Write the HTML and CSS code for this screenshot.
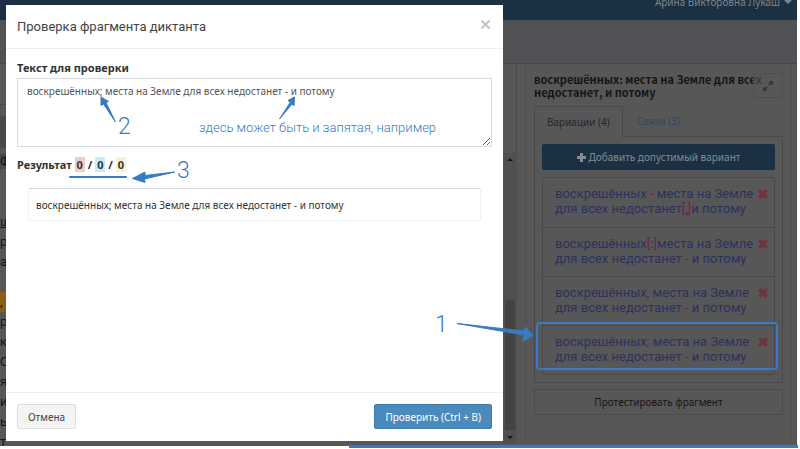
FILE: index.html
```html
<!DOCTYPE html>
<html lang="ru">
<head>
    <meta charset="UTF-8">
    <meta name="viewport" content="width=device-width, initial-scale=1.0">
    <title>Проверка фрагмента диктанта</title>
    <link rel="stylesheet" href="styles.css">
</head>
<body>

  <div class="page">
    <header class="navbar">
      <a class="user" href="#">Арина Викторовна Лукаш <span class="caret"></span></a>
    </header>
    <div class="subbar"></div>

    <main class="workspace">
      <!-- dictation text -->
      <section class="document">
        <div class="toolbar"></div>
        <div class="toolbar-row"></div>
        <div class="lines">
          <p><mark class="grey">Ф</mark></p>
          <p></p>
          <p></p>
          <p class="underlined">ш</p>
          <p>р</p>
          <p>а</p>
          <p></p>
          <p class="orange">,</p>
          <p>р</p>
          <p>к</p>
          <p>С</p>
          <p>я</p>
          <p>и</p>
          <p>ь</p>
          <p>т</p>
        </div>
      </section>

      <div class="scroll">
        <div class="scroll-head"></div>
        <div class="scroll-track">
          <span class="arrow up"></span>
          <span class="thumb"></span>
          <span class="arrow down"></span>
        </div>
      </div>

      <!-- fragment panel -->
      <aside class="fragment">
        <div class="fragment-head">
          <h2>воскрешённых: места на Земле для всех недостанет, и потому</h2>
          <button class="expand" aria-label="Развернуть">
            <svg width="12" height="12" viewBox="0 0 12 12"><path d="M7 1h4v4L9.600 3.700 7.600 5.600 6.400 4.400 8.300 2.400zM5 11H1V7l1.400 1.300 2-1.900 1.200 1.200-1.900 2z"/></svg>
          </button>
        </div>
        <nav class="tabs">
          <a class="tab active" href="#variants">Вариации (4)</a>
          <a class="tab" href="#links">Связи (3)</a>
        </nav>
        <div class="tab-content" id="variants">
          <button class="add">
            <svg width="9" height="9" viewBox="0 0 9 9"><path d="M3 0h3v3h3v3H6v3H3V6H0V3h3z"/></svg>
            Добавить допустимый вариант
          </button>
          <ul class="variants">
            <li>
              <span>воскрешённых <i>-</i> места на Земле<br>для всех недостанет<b>[</b>,<b>]</b>и потому</span>
              <button class="remove" aria-label="Удалить"><svg width="10" height="10" viewBox="0 0 10 10"><path d="M2.500 0L5 2.500 7.500 0 10 2.500 7.500 5 10 7.500 7.500 10 5 7.500 2.500 10 0 7.500 2.500 5 0 2.500z"/></svg></button>
            </li>
            <li>
              <span>воскрешённых<b>[</b>:<b>]</b>места на Земле<br>для всех недостанет <i>-</i> и потому</span>
              <button class="remove" aria-label="Удалить"><svg width="10" height="10" viewBox="0 0 10 10"><path d="M2.500 0L5 2.500 7.500 0 10 2.500 7.500 5 10 7.500 7.500 10 5 7.500 2.500 10 0 7.500 2.500 5 0 2.500z"/></svg></button>
            </li>
            <li>
              <span>воскрешённых<b>,</b> места на Земле<br>для всех недостанет <i>-</i> и потому</span>
              <button class="remove" aria-label="Удалить"><svg width="10" height="10" viewBox="0 0 10 10"><path d="M2.500 0L5 2.500 7.500 0 10 2.500 7.500 5 10 7.500 7.500 10 5 7.500 2.500 10 0 7.500 2.500 5 0 2.500z"/></svg></button>
            </li>
            <li>
              <span>воскрешённых<b>;</b> места на Земле<br>для всех недостанет <i>-</i> и потому</span>
              <button class="remove" aria-label="Удалить"><svg width="10" height="10" viewBox="0 0 10 10"><path d="M2.500 0L5 2.500 7.500 0 10 2.500 7.500 5 10 7.500 7.500 10 5 7.500 2.500 10 0 7.500 2.500 5 0 2.500z"/></svg></button>
            </li>
          </ul>
        </div>
        <button class="test">Протестировать фрагмент</button>
      </aside>
    </main>
  </div>

  <form class="modal" role="dialog" aria-labelledby="modalTitle">
    <div class="modal-header">
      <h1 id="modalTitle">Проверка фрагмента диктанта</h1>
      <button type="button" class="close" aria-label="Закрыть">
        <svg width="11" height="11" viewBox="0 0 11 11"><path d="M1.500 1.500l8 8M9.500 1.500l-8 8"/></svg>
      </button>
    </div>
    <div class="modal-body">
      <label for="source">Текст для проверки</label>
      <textarea id="source" spellcheck="false">воскрешённых; места на Земле для всех недостанет - и потому</textarea>
      <h3>Результат <span class="red">0</span> / <span class="blue">0</span> / <span class="yellow">0</span></h3>
      <div class="result">воскрешённых; места на Земле для всех недостанет - и потому</div>
    </div>
    <div class="modal-footer">
      <button type="button" class="cancel">Отмена</button>
      <button type="submit" class="check">Проверить (Ctrl + B)</button>
    </div>
  </form>

  <!-- hints drawn over the page -->
  <svg class="hints" width="800" height="449" viewBox="0 0 800 449">
    <g class="shapes">
      <path d="M115.500 122L106 102.500l2.500-1L101 97l0 8.500 2.500-1.500z"/>
      <path d="M279.500 119L290.500 102l-2.500-1.500L294.500 97l-.5 8.500-2-1.500z"/>
      <path d="M174.500 172L145 175.500l0-3.500L132.500 178.500 145 182.500l-.5-3.500z"/>
      <path d="M457 323.500L524 335l-1.500 6.500L533 335.500 525.500 327l-1 4z"/>
      <rect x="69" y="176" width="58" height="2" rx="1"/>
      <rect x="349" y="445" width="449" height="3"/>
    </g>
    <rect class="frame" x="537" y="323" width="240" height="46" rx="3"/>
    <text class="num" x="435" y="332">1</text>
    <text class="num" x="118" y="134">2</text>
    <text class="num" x="177" y="178">3</text>
    <text class="note" x="199" y="132">здесь может быть и запятая, например</text>
  </svg>

</body>
</html>
```
FILE: styles.css
```css
* {
  box-sizing: border-box;
}

body {
  margin: 0;
  position: relative;
  min-height: 449px;
  background: #fff;
  color: #333;
  font-family: "Noto Sans", sans-serif;
  font-size: 10px;
}

h1, h2, h3, p, ul {
  margin: 0;
  padding: 0;
}

button {
  font: inherit;
  cursor: pointer;
}

a {
  text-decoration: none;
}

.lines, .variants li, .modal-header h1 {
  font-family: Roboto, "Noto Sans", sans-serif;
  font-size: 13px;
}

/* page under the backdrop */
.page {
  display: flex;
  flex-direction: column;
  height: 446px;
  margin-right: 3px;
  background: #575757;
  overflow: hidden;
}

.navbar {
  display: flex;
  justify-content: flex-end;
  height: 20px;
  flex: none;
  padding-right: 5px;
  background: #1b3042;
}

.user {
  display: flex;
  align-items: center;
  gap: 4px;
  height: 4px;
  color: #7d858b;
}

.caret {
  border: 4px solid transparent;
  border-top-color: #7d858b;
  border-bottom: 0;
}

.subbar {
  height: 44px;
  flex: none;
  background: #505255;
  border-bottom: 1px solid #464749;
}

.workspace {
  display: flex;
  flex: 1;
  min-height: 0;
  padding-right: 4px;
  border-right: 1px solid #4e5052;
}

.document {
  flex: 1;
  overflow: hidden;
}

.toolbar {
  height: 41px;
  border-bottom: 1px solid #484848;
}

.toolbar-row {
  height: 43px;
  border-top: 11px solid #575757;
  background: #484848;
}

.lines {
  padding-top: 4px;
  line-height: 20px;
  color: #161616;
}

.lines p {
  height: 20px;
}

.grey {
  color: inherit;
  background: #484848;
}

.underlined {
  text-decoration: underline;
}

.orange {
  background: #8a5f17;
}

.scroll {
  width: 14px;
  margin-right: 8px;
}

.scroll-head {
  height: 89px;
  border-right: 1px solid #484848;
}

.scroll-track {
  display: flex;
  flex-direction: column;
  align-items: center;
  height: 291px;
  padding: 5px 2px;
  background: #505050;
}

.arrow {
  border: 3px solid transparent;
}

.up {
  border-bottom-color: #161616;
  border-top: 0;
}

.down {
  border-top-color: #161616;
  border-bottom: 0;
}

.thumb {
  width: 100%;
  height: 130px;
  margin-top: auto;
  margin-bottom: 6px;
  background: #434343;
}

.fragment {
  width: 267px;
  padding: 9px 8px;
  border: 1px solid #515151;
  border-width: 0 1px;
}

.fragment-head {
  position: relative;
  height: 33px;
}

.fragment-head h2 {
  font-family: "Noto Sans CJK SC", "Noto Sans", sans-serif;
  font-size: 11px;
  line-height: 13px;
  color: #151515;
}

.expand {
  position: absolute;
  top: 0;
  right: 0;
  display: grid;
  place-items: center;
  width: 30px;
  height: 25px;
  background: #57575799;
  border: 1px solid #4e4e4e;
}

.expand svg {
  fill: #333;
}

.tabs {
  display: flex;
  border-bottom: 1px solid #484848;
}

.tab {
  height: 30px;
  padding: 0 14px;
  line-height: 30px;
  color: #304866;
}

.tab.active {
  height: 31px;
  margin-bottom: -1px;
  padding: 0 12px;
  color: #262626;
  background: #575757;
  border: 1px solid #484848;
  border-bottom: 0;
  border-radius: 2px 2px 0 0;
}

.tab-content {
  padding: 7px;
  border: 1px solid #484848;
  border-top: 0;
}

.add {
  display: flex;
  justify-content: center;
  align-items: center;
  gap: 3px;
  width: 100%;
  height: 26px;
  color: #858b90;
  background: #1b3042;
  border: 0;
  border-radius: 2px;
}

.add svg {
  fill: #858b90;
}

.variants {
  margin-top: 7px;
  list-style: none;
  border: 1px solid #484848;
  border-radius: 3px;
}

.variants li {
  display: flex;
  justify-content: space-between;
  height: 49px;
  padding: 8px 6px 0 12px;
  line-height: 15px;
  white-space: nowrap;
  color: #2c325d;
}

.variants li + li {
  border-top: 1px solid #484848;
}

.variants b, .variants i {
  font-style: normal;
  font-weight: normal;
  color: #7b1b45;
}

.remove {
  height: 16px;
  padding: 2px 0;
  background: none;
  border: 0;
}

.remove svg {
  display: block;
  fill: #71343f;
}

.test {
  width: 100%;
  height: 26px;
  margin-top: 6px;
  color: #151515;
  background: none;
  border: 1px solid #4a4a4a;
  border-radius: 2px;
}

/* modal window */
.modal {
  position: absolute;
  top: 5px;
  left: 6px;
  display: flex;
  flex-direction: column;
  width: 497px;
  height: 436px;
  background: #fff;
}

.modal-header {
  display: flex;
  justify-content: space-between;
  height: 44px;
  padding: 12px 12px 12px 11px;
  border-bottom: 1px solid #eee;
}

.modal-header h1 {
  font-weight: normal;
  line-height: 20px;
  color: #444;
}

.close {
  height: 14px;
  padding: 0;
  background: none;
  border: 0;
}

.close svg {
  display: block;
  fill: none;
  stroke: #c4c4c4;
  stroke-width: 2;
}

.modal-body {
  flex: 1;
  padding: 11px;
}

.modal-body label, .modal-body h3 {
  display: block;
  font-size: 11px;
  font-weight: bold;
  line-height: 16px;
}

.modal-body textarea {
  display: block;
  width: 100%;
  height: 69px;
  margin: 2px 0 10px;
  padding: 4px 9px;
  font: inherit;
  line-height: 16px;
  color: #555;
  background: #fff;
  border: 1px solid #d9dae3;
  outline: 0;
}

.modal-body h3 span {
  padding: 0 2px;
}

.red {
  background: #f2cccc;
}

.blue {
  background: #c9ebf9;
}

.yellow {
  background: #f4f3cd;
}

.result {
  margin: 15px 11px 0;
  padding: 0 7px;
  height: 33px;
  line-height: 32px;
  border: 1px solid #f0f0f0;
  border-top-color: #d2d4dd;
  border-radius: 2px;
}

.modal-footer {
  display: flex;
  justify-content: space-between;
  height: 49px;
  padding: 11px;
  border-top: 1px solid #eee;
}

.modal-footer button {
  height: 25px;
  padding: 0 10px;
  border: 1px solid #ddd;
  border-radius: 2px;
}

.modal-footer .cancel {
  color: #444;
  background: #f4f4f4;
}

.modal-footer .check {
  color: #fff;
  background: #4a8abc;
  border-color: #3f7cad;
}

.hints {
  position: absolute;
  top: 0;
  left: 0;
  pointer-events: none;
}

.shapes {
  fill: #397ac0;
  stroke: #397ac0;
  stroke-width: 1;
  stroke-linejoin: round;
}

.shapes rect {
  stroke: none;
}

.frame {
  fill: none;
  stroke: #397ac0;
  stroke-width: 2;
}

.num, .note {
  font-family: Roboto, sans-serif;
  font-weight: 300;
  fill: #397ac0;
}

.num {
  font-size: 23px;
}

.note {
  font-size: 13px;
}
```
